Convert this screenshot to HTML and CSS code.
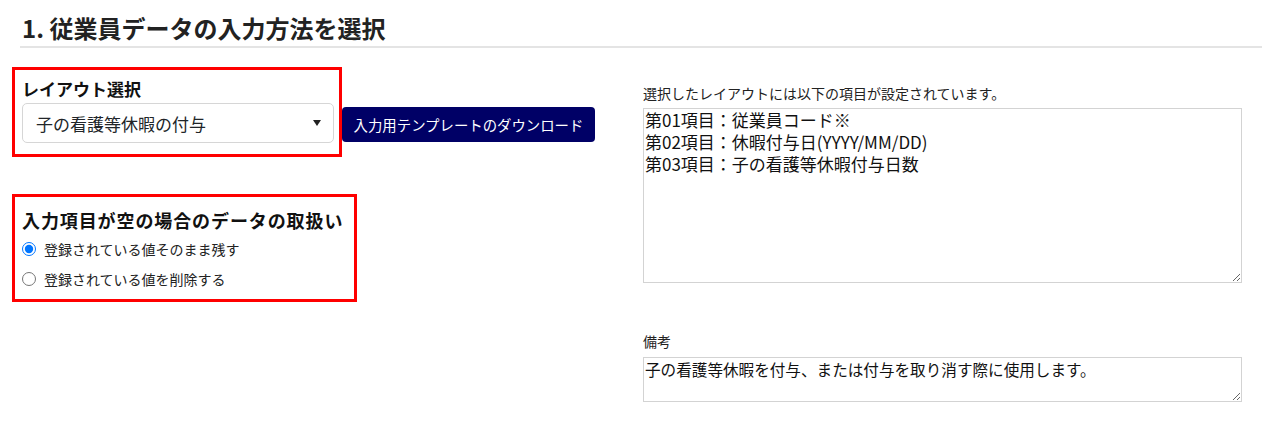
FILE: index.html
```html
<!DOCTYPE html>
<html lang="ja">
<head>
<meta charset="utf-8">
<title>従業員データの入力方法を選択</title>
<link rel="stylesheet" href="styles.css">
</head>
<body>
<div class="page">
  <h1 class="section-title">1. 従業員データの入力方法を選択</h1>
  <div class="columns">
    <div class="col-left">
      <div class="layout-row">
        <div class="mark-box layout-box">
          <div class="field-label">レイアウト選択</div>
          <div class="select-wrap">
            <select class="layout-select">
              <option>子の看護等休暇の付与</option>
            </select>
          </div>
        </div>
        <button class="btn-download" type="button">入力用テンプレートのダウンロード</button>
      </div>
      <div class="mark-box empty-box">
        <div class="field-label">入力項目が空の場合のデータの取扱い</div>
        <label class="radio-row"><input type="radio" name="empty" checked><span>登録されている値そのまま残す</span></label>
        <label class="radio-row"><input type="radio" name="empty"><span>登録されている値を削除する</span></label>
      </div>
    </div>
    <div class="col-right">
      <div class="small-label">選択したレイアウトには以下の項目が設定されています。</div>
      <textarea class="area area-items" readonly>第01項目：従業員コード※
第02項目：休暇付与日(YYYY/MM/DD)
第03項目：子の看護等休暇付与日数</textarea>
      <div class="small-label remarks-label">備考</div>
      <textarea class="area area-remarks" readonly>子の看護等休暇を付与、または付与を取り消す際に使用します。</textarea>
    </div>
  </div>
</div>
</body>
</html>
```

FILE: styles.css
```css
* { box-sizing: border-box; }

html, body {
  margin: 0;
  padding: 0;
  background: #ffffff;
}

body {
  font-family: "Noto Sans CJK JP", "Noto Sans", sans-serif;
  color: #212529;
  width: 1280px;
  height: 424px;
  overflow: hidden;
}

.page {
  padding: 0 18px 0 12px;
}

.section-title {
  margin: 0 0 0 8px;
  padding: 12px 0 2px 2px;
  font-size: 24px;
  line-height: 32px;
  font-weight: 700;
  color: #222222;
  border-bottom: 2px solid #e4e4e4;
}

.columns {
  display: grid;
  grid-template-columns: 631px 599px;
}

.col-left {
  display: flex;
  flex-direction: column;
  align-items: flex-start;
  padding-top: 19px;
}

.layout-row {
  display: flex;
  align-items: flex-end;
}

.mark-box {
  border: 3px solid #ff0000;
}

.layout-box {
  width: 330px;
  padding: 7px 4px 11px 7px;
}

.field-label {
  font-size: 18px;
  line-height: 24px;
  font-weight: 700;
  color: #111111;
}

.layout-box .field-label {
  font-size: 17px;
}

.empty-box .field-label {
  letter-spacing: 0.9px;
}

.select-wrap {
  position: relative;
  margin-top: 2px;
  width: 312px;
}

.select-wrap::after {
  content: "";
  position: absolute;
  right: 13px;
  top: 17px;
  border-left: 4px solid transparent;
  border-right: 4px solid transparent;
  border-top: 6px solid #222222;
  pointer-events: none;
}

.layout-select {
  -webkit-appearance: none;
  appearance: none;
  display: block;
  width: 312px;
  height: 40px;
  padding: 0 30px 0 13px;
  font-family: inherit;
  font-size: 17px;
  color: #212529;
  background: #ffffff;
  border: 1px solid #d6d6d6;
  border-radius: 5px;
}

.btn-download {
  margin-bottom: 15px;
  height: 35px;
  padding: 0;
  width: 253px;
  white-space: nowrap;
  font-family: inherit;
  font-size: 14.4px;
  color: #ffffff;
  background: #000066;
  border: none;
  border-radius: 4px;
}

.empty-box {
  margin-top: 37px;
  width: 345px;
  padding: 11px 4px 7px 7px;
}

.radio-row {
  display: flex;
  align-items: center;
  gap: 8px;
  height: 26px;
  margin-top: 4px;
  font-size: 14px;
  color: #222222;
}

.radio-row input {
  margin: 0;
  width: 14px;
  height: 14px;
}

.col-right {
  display: flex;
  flex-direction: column;
  padding-top: 35px;
}

.small-label {
  font-size: 14px;
  line-height: 20px;
  color: #222222;
}

.area {
  display: block;
  width: 599px;
  margin-top: 5px;
  padding: 0 1px;
  font-family: inherit;
  font-size: 17px;
  line-height: 22px;
  color: #111111;
  background: #ffffff;
  border: 1px solid #d3d3d3;
  border-radius: 0;
  outline: none;
}

.area-items {
  height: 175px;
}

.remarks-label {
  margin-top: 48px;
}

.area-remarks {
  margin-top: 6px;
  height: 45px;
  font-size: 15.6px;
}
```
